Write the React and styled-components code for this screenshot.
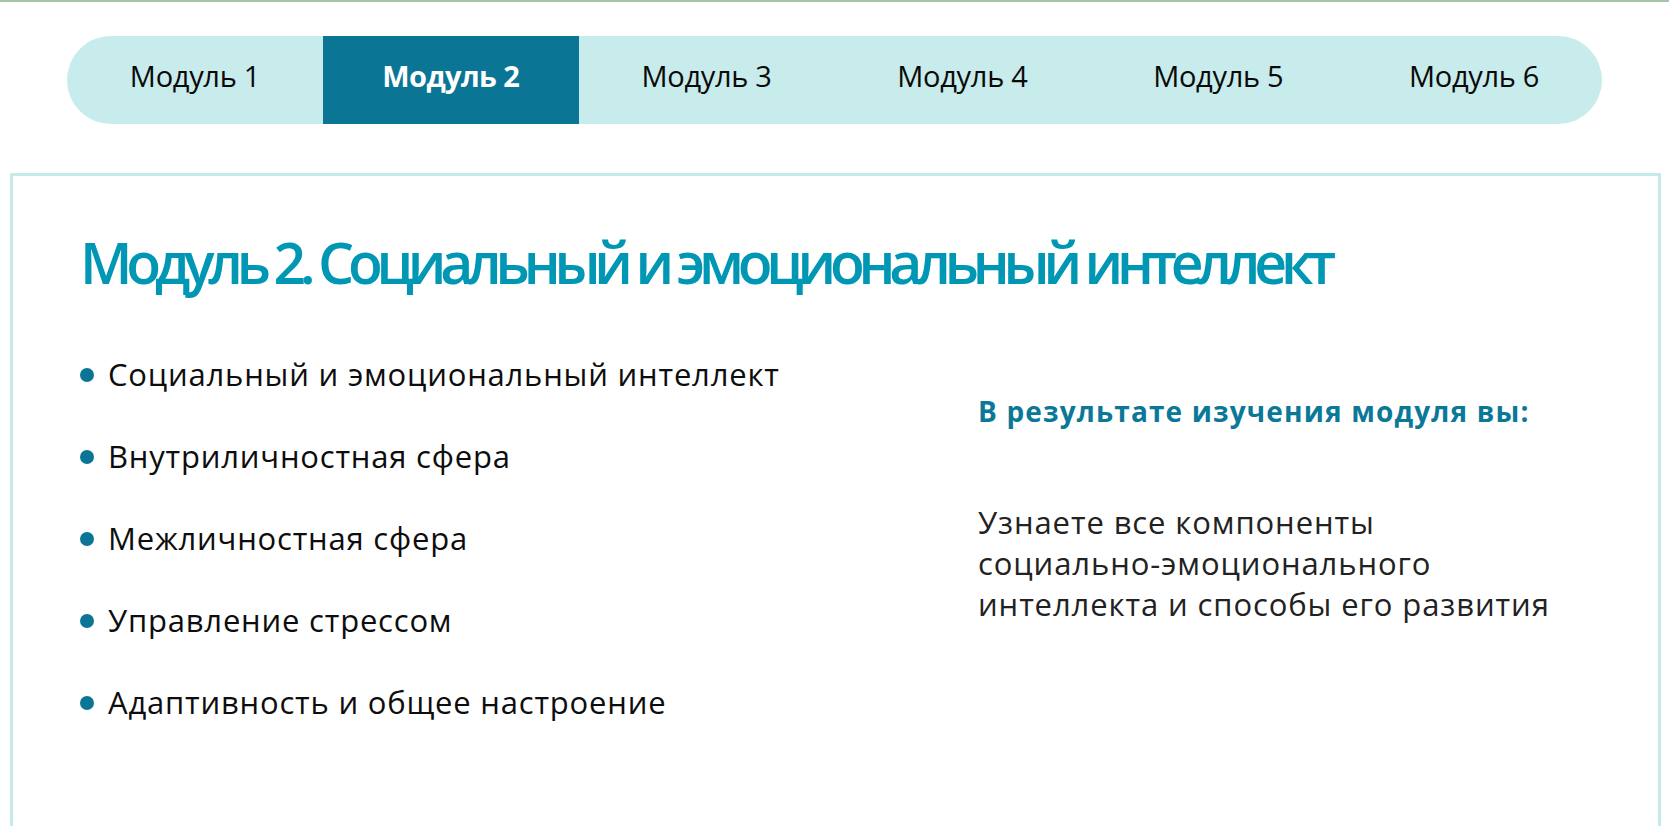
import React from "react";
import styled, { createGlobalStyle } from "styled-components";

const GlobalStyle = createGlobalStyle`
  html, body {
    margin: 0;
    padding: 0;
    background: #ffffff;
  }
  body {
    font-family: "Open Sans", "Noto Sans", sans-serif;
    color: #111111;
    overflow: hidden;
  }
`;

const Page = styled.div`
  border-top: 2px solid #a6c6a6;
  min-height: 824px;
`;

const TabBar = styled.nav`
  display: grid;
  grid-template-columns: repeat(6, 1fr);
  width: 1535px;
  height: 88px;
  margin: 34px auto 0;
  background: #c8ebeb;
  border-radius: 44px;
  overflow: hidden;
`;

const Tab = styled.button`
  border: 0;
  margin: 0;
  padding: 0 0 10px;
  font-family: "Open Sans", "Noto Sans", sans-serif;
  font-size: 29px;
  letter-spacing: ${(p) => (p.$active ? "-0.6px" : "-0.3px")};
  font-weight: ${(p) => (p.$active ? 700 : 400)};
  color: ${(p) => (p.$active ? "#ffffff" : "#0a0a0a")};
  background: ${(p) => (p.$active ? "#0b7596" : "transparent")};
  cursor: pointer;
`;

const Panel = styled.section`
  margin: 49px 0 0 10px;
  width: 1651px;
  box-sizing: border-box;
  border: 3px solid #c6e9e9;
  padding: 50px 67px 120px;
`;

const Title = styled.h1`
  margin: 0;
  font-size: 57px;
  line-height: 72px;
  font-weight: 600;
  letter-spacing: -6.2px;
  color: #0097b4;
`;

const Columns = styled.div`
  display: grid;
  grid-template-columns: 898px 1fr;
  margin-top: 56px;
`;

const Topics = styled.ul`
  list-style: none;
  margin: 0;
  padding: 0;
  display: flex;
  flex-direction: column;
  gap: 42px;
`;

const Topic = styled.li`
  display: flex;
  align-items: center;
  gap: 14px;
  font-size: 31px;
  line-height: 40px;
  letter-spacing: 0.8px;
  color: #0d0d0d;

  &::before {
    content: "";
    flex: none;
    width: 14px;
    height: 14px;
    border-radius: 50%;
    background: #0b7596;
    margin-top: 2px;
  }
`;

const Outcome = styled.div`
  padding-top: 39px;
`;

const OutcomeLead = styled.h3`
  margin: 0;
  font-size: 28px;
  line-height: 36px;
  font-weight: 700;
  letter-spacing: 1.15px;
  color: #0b7898;
`;

const OutcomeText = styled.p`
  margin: 73px 0 0;
  font-size: 31px;
  line-height: 41px;
  letter-spacing: 0.9px;
  color: #222222;
  max-width: 620px;
`;

const modules = ["Модуль 1", "Модуль 2", "Модуль 3", "Модуль 4", "Модуль 5", "Модуль 6"];

const topics = [
  "Социальный и эмоциональный интеллект",
  "Внутриличностная сфера",
  "Межличностная сфера",
  "Управление стрессом",
  "Адаптивность и общее настроение",
];

export default function App() {
  return (
    <>
      <GlobalStyle />
      <Page>
        <TabBar>
          {modules.map((m, i) => (
            <Tab key={m} $active={i === 1}>
              {m}
            </Tab>
          ))}
        </TabBar>
        <Panel>
          <Title>Модуль 2. Социальный и эмоциональный интеллект</Title>
          <Columns>
            <Topics>
              {topics.map((t) => (
                <Topic key={t}>{t}</Topic>
              ))}
            </Topics>
            <Outcome>
              <OutcomeLead>В результате изучения модуля вы:</OutcomeLead>
              <OutcomeText>
                Узнаете все компоненты
                <br />
                социально-эмоционального
                <br />
                интеллекта и способы его развития
              </OutcomeText>
            </Outcome>
          </Columns>
        </Panel>
      </Page>
    </>
  );
}
